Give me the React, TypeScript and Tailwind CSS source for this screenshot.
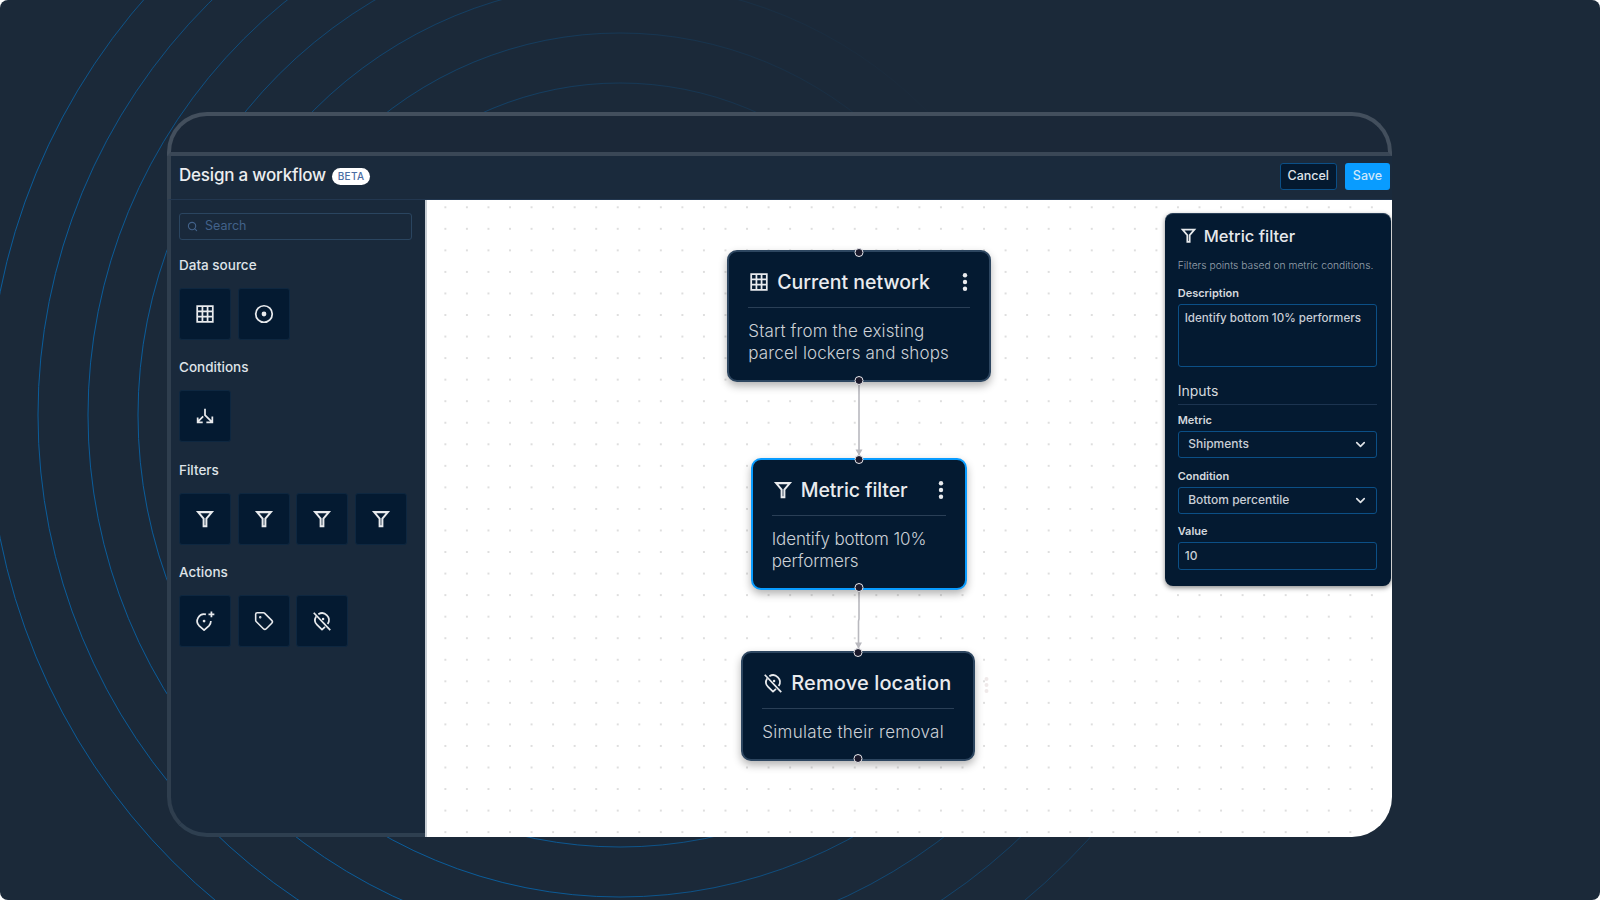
import React from 'react';
import { ChevronDown, Search, Tag } from 'lucide-react';

const rings = [332, 382, 432, 482, 532, 582, 632];

const TableIcon = ({ size = 22 }: { size?: number }) => (
    <svg width={size} height={size} viewBox="0 0 24 24" fill="none" stroke="currentColor" strokeWidth="1.9">
        <path d="M3.5 3.5h17v17h-17zM9.2 3.5v17M14.8 3.5v17M3.5 9.2h17M3.5 14.8h17" />
    </svg>
);

const TargetIcon = ({ size = 22 }: { size?: number }) => (
    <svg width={size} height={size} viewBox="0 0 24 24" fill="none" stroke="currentColor" strokeWidth="1.9">
        <circle cx="12" cy="12" r="9" />
        <circle cx="12" cy="12" r="2.6" fill="currentColor" stroke="none" />
    </svg>
);

const SplitIcon = ({ size = 22 }: { size?: number }) => (
    <svg width={size} height={size} viewBox="0 0 24 24" fill="none" stroke="currentColor" strokeWidth="1.9">
        <path d="M12 4v7l7.5 7.5M20 12.500v6.500h-6.500M10 12.500l-6 6M4 13.500v5.500h5.500" />
    </svg>
);

const FunnelIcon = ({ size = 22 }: { size?: number }) => (
    <svg width={size} height={size} viewBox="0 0 24 24" fill="none" stroke="currentColor" strokeWidth="2.2">
        <path d="M4.500 4.500h15l-6 7v8.500h-3v-8.500z" strokeLinejoin="miter" />
    </svg>
);

const PinPlusIcon = ({ size = 22 }: { size?: number }) => (
    <svg width={size} height={size} viewBox="0 0 24 24" fill="none" stroke="currentColor" strokeWidth="1.9">
        <path d="M13 4.800A7.500 7.500 0 0 0 5.700 17.300L11 22l5.300-4.700A7.500 7.500 0 0 0 18.400 12" strokeLinejoin="round" />
        <circle cx="11" cy="12" r="1.500" fill="currentColor" stroke="none" />
        <path d="M19 1.500v6.500M15.800 4.800h6.400" />
    </svg>
);

const PinOffIcon = ({ size = 22 }: { size?: number }) => (
    <svg width={size} height={size} viewBox="0 0 24 24" fill="none" stroke="currentColor" strokeWidth="1.9">
        <path d="M3 3l18 19" />
        <path d="M8 4.650A7.500 7.500 0 0 1 18.200 15.200M5.600 7A7.500 7.500 0 0 0 6.700 16.300L12 21.500l3.300-3" strokeLinejoin="round" />
        <circle cx="13.200" cy="9.800" r="1.300" fill="currentColor" stroke="none" />
    </svg>
);

const KebabIcon = () => (
    <svg width="6" height="20" viewBox="0 0 6 20" fill="currentColor">
        <circle cx="3" cy="3.300" r="2.200" />
        <circle cx="3" cy="10" r="2.200" />
        <circle cx="3" cy="16.700" r="2.200" />
    </svg>
);

const Tile = ({ children }: { children: React.ReactNode }) => (
    <div className="w-[52px] h-[52px] rounded-[3px] bg-[#041a31] border border-[#0e2740] flex items-center justify-center text-[#e8eaed]">
        {children}
    </div>
);

const Section = ({ title, children }: { title: string; children: React.ReactNode }) => (
    <div className="mt-[17.500px]">
        <div className="h-5 text-[13.500px] leading-5 font-medium text-[#dfe3e8]">{title}</div>
        <div className="mt-[13px] flex gap-[6.600px]">{children}</div>
    </div>
);

const Handle = ({ side }: { side: 'top' | 'bottom' }) => (
    <div
        className={
            'absolute left-1/2 -translate-x-1/2 w-[9px] h-[9px] rounded-full bg-[#1a192b] border border-[#e8e8ec] ' +
            (side === 'top' ? 'top-[-4.500px]' : 'bottom-[-4.500px]')
        }
    />
);

type NodeProps = {
    className: string;
    icon: React.ReactNode;
    title: string;
    titleClass: string;
    descClass: string;
    menu?: boolean;
    children: React.ReactNode;
};

const FlowNode = ({ className, icon, title, titleClass, descClass, menu, children }: NodeProps) => (
    <div className={'absolute rounded-[10px] bg-[#041a31] border-2 px-[19px] pt-[18px] pb-[16px] shadow-[0_4px_9px_rgba(0,0,0,0.3)] ' + className}>
        <Handle side="top" />
        <div className="h-6 flex items-center text-[#e9ebee]">
            {icon}
            <span className={'ml-[7px] leading-6 font-medium ' + titleClass}>{title}</span>
            {menu && (
                <span className="ml-auto mr-[2px] flex">
                    <KebabIcon />
                </span>
            )}
        </div>
        <div className="mt-[13px] h-px bg-[#2a3f56]" />
        <div className={'mt-[12px] text-[17px] leading-[22px] font-light text-[#ccd1d7] ' + descClass}>{children}</div>
        <Handle side="bottom" />
    </div>
);

const FieldLabel = ({ className, children }: { className: string; children: React.ReactNode }) => (
    <div className={'h-[14px] text-[11px] leading-[14px] font-semibold text-[#d5d9de] ' + className}>{children}</div>
);

const SelectBox = ({ className, value }: { className: string; value: string }) => (
    <div className={'rounded-[3px] border border-[#0b4f86] pl-[9.500px] pr-[8px] flex items-center justify-between text-[12px] font-medium text-[#c9ced6] ' + className}>
        <span>{value}</span>
        <ChevronDown size={15} strokeWidth={2.6} className="text-[#e0e3e7]" />
    </div>
);

export default function App() {
    return (
        <div className="w-[1600px] h-[900px] bg-white font-['Inter',sans-serif]">
            <div className="relative w-full h-full rounded-[8px] overflow-hidden bg-[#1b2939]">
                <svg className="absolute inset-0" width="1600" height="900" fill="none">
                    <defs>
                        <linearGradient id="ring" gradientUnits="userSpaceOnUse" x1="0" y1="900" x2="1200" y2="100">
                            <stop offset="0.3" stopColor="#0a5c9a" />
                            <stop offset="0.85" stopColor="#0a5c9a" stopOpacity="0" />
                        </linearGradient>
                    </defs>
                    {rings.map((r) => (
                        <circle key={r} cx="620" cy="415" r={r} stroke="url(#ring)" strokeWidth="1" />
                    ))}
                </svg>

                <div className="relative ml-[167px] pt-[112px] w-[1225px]">
                    <div className="h-[44px] rounded-t-[40px] border-4 border-[#434f5d] border-b-[#3a4756] bg-[#1b2838]" />

                    <div className="h-[681px] flex flex-col rounded-bl-[40px]">
                        <div className="h-[44px] shrink-0 border-l-4 border-b border-l-[#354250] border-b-[#223750] bg-[#1a2a3c] flex items-center pl-[8px] pr-[2px] pb-[3px]">
                            <span className="text-[17px] tracking-[-0.2px] font-medium text-[#eceef0]">Design a workflow</span>
                            <span className="ml-[6px] w-[38px] h-[17px] rounded-full bg-white flex items-center justify-center text-[10px] font-medium tracking-[0.3px] text-[#4a6da3]">
                                BETA
                            </span>
                            <button className="ml-auto w-[57.500px] h-[27px] rounded-[3px] bg-[#04192f] border border-[#0b4f86] text-[12.500px] font-medium text-[#dfe3e8]">
                                Cancel
                            </button>
                            <button className="ml-[8px] w-[45px] h-[27px] rounded-[3px] bg-[#099cff] text-[12.500px] font-medium text-[#cfe8fb]">
                                Save
                            </button>
                        </div>

                        <div className="flex-1 flex min-h-0">
                            <div className="w-[258px] shrink-0 border-l-4 border-b-4 border-l-[#2f3e4e] border-b-[#2e3f50] rounded-bl-[40px] bg-[#19293b] pl-[8px]">
                                <div className="mt-[13px] mb-[-2.500px] w-[233px] h-[26.500px] rounded-[3px] border border-[#2a4560] flex items-center pl-[7px] text-[12.500px] text-[#42628a]">
                                    <Search size={11} strokeWidth={2.4} />
                                    <span className="ml-[7px]">Search</span>
                                </div>
                                <Section title="Data source">
                                    <Tile><TableIcon /></Tile>
                                    <Tile><TargetIcon /></Tile>
                                </Section>
                                <Section title="Conditions">
                                    <Tile><SplitIcon /></Tile>
                                </Section>
                                <Section title="Filters">
                                    <Tile><FunnelIcon /></Tile>
                                    <Tile><FunnelIcon /></Tile>
                                    <Tile><FunnelIcon /></Tile>
                                    <Tile><FunnelIcon /></Tile>
                                </Section>
                                <Section title="Actions">
                                    <Tile><PinPlusIcon /></Tile>
                                    <Tile><Tag size={20} strokeWidth={1.9} /></Tile>
                                    <Tile><PinOffIcon /></Tile>
                                </Section>
                            </div>

                            <div className="relative flex-1 border-l-2 border-[#c8ced4] rounded-br-[40px] overflow-hidden bg-white bg-[radial-gradient(circle,#cfcfcf_0.6px,transparent_0.9px)] bg-[size:21.56px_21.56px] bg-[position:7.6px_-3.5px]">
                                <svg className="absolute inset-0" width="965" height="638" fill="none">
                                    <path d="M432 179V255" stroke="#b8b8be" strokeWidth="1.6" />
                                    <path d="M428.500 249.500h7l-3.500 6z" fill="#b8b8be" />
                                    <path d="M432 387V419l-0.500 2V448" stroke="#b8b8be" strokeWidth="1.6" />
                                    <path d="M428 442.500h7l-3.500 6z" fill="#b8b8be" />
                                </svg>

                                <FlowNode
                                    className="left-[300.300px] top-[50px] w-[263.500px] border-[#2d4660]"
                                    icon={<TableIcon />}
                                    title="Current network"
                                    titleClass="text-[19.500px]"
                                    descClass="tracking-[0.13px]"
                                    menu
                                >
                                    Start from the existing
                                    <br />
                                    parcel lockers and shops
                                </FlowNode>

                                <FlowNode
                                    className="left-[323.700px] top-[257.700px] w-[216px] border-[#099cff]"
                                    icon={<FunnelIcon />}
                                    title="Metric filter"
                                    titleClass="text-[19.500px] tracking-[-0.1px]"
                                    descClass="tracking-[-0.1px]"
                                    menu
                                >
                                    Identify bottom 10%
                                    <br />
                                    performers
                                </FlowNode>

                                <FlowNode
                                    className="left-[314.300px] top-[450.500px] w-[233.700px] border-[#2d4660]"
                                    icon={<PinOffIcon />}
                                    title="Remove location"
                                    titleClass="text-[20px] tracking-[0.12px]"
                                    descClass="tracking-[0.3px]"
                                >
                                    Simulate their removal
                                    <svg className="absolute right-[-16px] top-[22px]" width="5" height="20" fill="#efe9e9">
                                        <circle cx="2.500" cy="4" r="2" />
                                        <circle cx="2.500" cy="10" r="2" />
                                        <circle cx="2.500" cy="16" r="2" />
                                    </svg>
                                </FlowNode>

                                <div className="absolute left-[737.700px] top-[12.700px] w-[226.300px] h-[373.300px] rounded-[8px] bg-[#041a31] border-t border-[#2a4058] px-[13px] pt-[10.300px] shadow-[0_2px_5px_rgba(0,0,0,0.45)]">
                                    <div className="h-6 flex items-center text-[#e6e9ec]">
                                        <span className="ml-[1px] flex"><FunnelIcon size={19} /></span>
                                        <span className="ml-[6px] text-[16.500px] leading-6 font-medium">Metric filter</span>
                                    </div>
                                    <div className="mt-[10px] h-[14px] text-[10.250px] leading-[14px] font-light text-[#98a2ae]">
                                        Filters points based on metric conditions.
                                    </div>
                                    <FieldLabel className="mt-[14.300px]">Description</FieldLabel>
                                    <textarea
                                        readOnly
                                        value="Identify bottom 10% performers"
                                        className="mt-[4px] block w-[199px] h-[63px] rounded-[3px] border border-[#0b4f86] bg-transparent px-[6px] py-[5px] text-[11.600px] leading-[16px] font-medium text-[#c9ced6] resize-none outline-none"
                                    />
                                    <div className="mt-[14px] h-5 text-[14px] leading-5 text-[#d5d9de]">Inputs</div>
                                    <div className="mt-[3px] w-[199px] h-px bg-[#1c3450]" />
                                    <FieldLabel className="mt-[7.500px]">Metric</FieldLabel>
                                    <SelectBox className="mt-[4.300px] w-[199px] h-[26.700px]" value="Shipments" />
                                    <FieldLabel className="mt-[11px]">Condition</FieldLabel>
                                    <SelectBox className="mt-[4px] w-[199px] h-[27px]" value="Bottom percentile" />
                                    <FieldLabel className="mt-[10px]">Value</FieldLabel>
                                    <input
                                        readOnly
                                        value="10"
                                        className="mt-[4px] block w-[199px] h-[28px] rounded-[3px] border border-[#0b4f86] bg-transparent px-[6px] text-[12px] font-medium text-[#c9ced6] outline-none"
                                    />
                                </div>
                            </div>
                        </div>
                    </div>
                </div>
            </div>
        </div>
    );
}
